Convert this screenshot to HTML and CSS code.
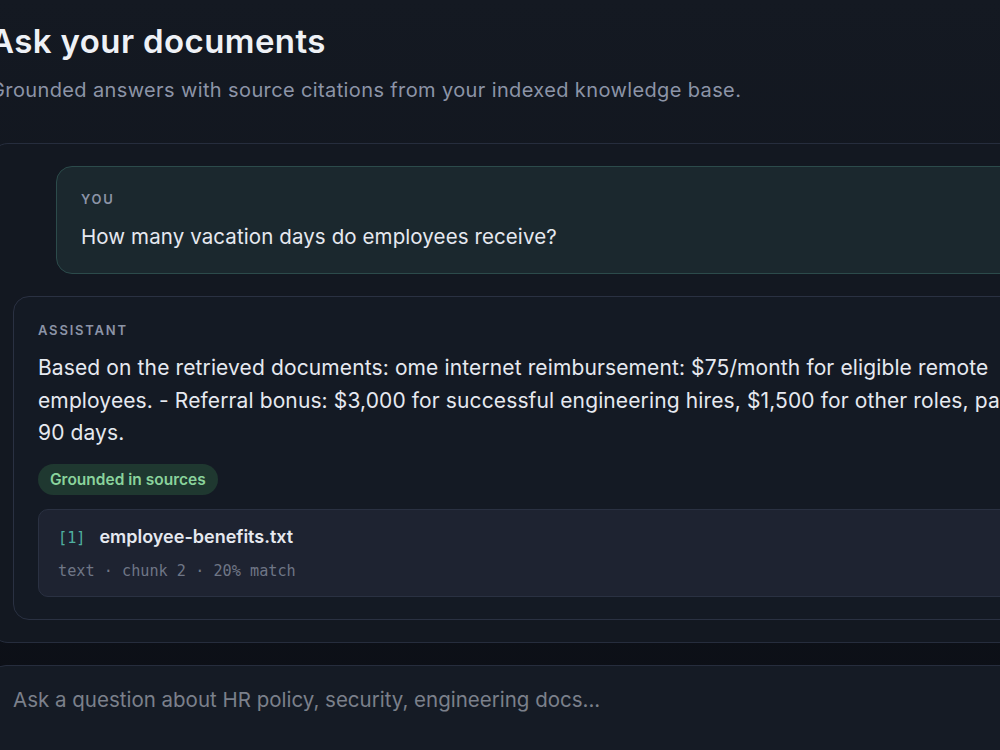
FILE: index.html
```html
<!DOCTYPE html>
<html lang="en">
<head>
  <meta charset="UTF-8" />
  <meta name="viewport" content="width=device-width, initial-scale=1.0"/>
  <title>Ask your documents</title>
  <link rel="stylesheet" href="styles.css">
</head>
<body>

  <main class="page">
    <header class="intro">
      <h1>Ask your documents</h1>
      <p>Grounded answers with source citations from your indexed knowledge base.</p>
    </header>

    <section class="thread">
      <div class="msg msg-user">
        <div class="msg-role">You</div>
        <p class="msg-text">How many vacation days do employees receive?</p>
      </div>

      <div class="msg msg-assistant">
        <div class="msg-role">Assistant</div>
        <p class="msg-text">Based on the retrieved documents: ome internet reimbursement: $75/month for eligible remote employees. - Referral bonus: $3,000 for successful engineering hires, $1,500 for other roles, paid after 90 days.</p>
        <div class="badge">Grounded in sources</div>
        <div class="source">
          <div class="source-head">
            <span class="source-idx">[1]</span>
            <span class="source-name">employee-benefits.txt</span>
          </div>
          <div class="source-meta">text · chunk 2 · 20% match</div>
        </div>
      </div>
    </section>

    <form class="ask">
      <textarea id="question" rows="3" placeholder="Ask a question about HR policy, security, engineering docs..."></textarea>
    </form>
  </main>

</body>
</html>
```

FILE: styles.css
```css
:root {
  --bg-top: #141922;
  --bg-bottom: #0b0e15;
  --panel: #131821;
  --line: #262d3d;
  --text: #e6e9f0;
  --muted: #8c94a7;
}

html, body {
  margin: 0;
  height: 100%;
  overflow: hidden;
}

body {
  background: linear-gradient(180deg, var(--bg-top) 0%, #10141c 60%, var(--bg-bottom) 100%);
  color: var(--text);
  font-family: "Inter", "Noto Sans", sans-serif;
}

.page {
  width: 1136px;
  margin-left: -10px;
  padding-top: 22px;
}

.intro h1 {
  margin: 0;
  font-size: 33px;
  line-height: 38px;
  font-weight: 600;
  letter-spacing: 0.4px;
  color: #eef1f6;
}

.intro p {
  margin: 16px 0 0;
  font-size: 20px;
  line-height: 28px;
  letter-spacing: 0.38px;
  color: var(--muted);
}

.thread {
  margin-top: 39px;
  background: var(--panel);
  border: 1px solid var(--line);
  border-radius: 18px;
  padding: 22px;
  display: flex;
  flex-direction: column;
  gap: 22px;
}

.msg {
  border-radius: 16px;
}

.msg-user {
  margin-left: 43px;
  padding: 23px 24px 21px;
  background: #1b282e;
  border: 1px solid #2c4b4b;
}

.msg-assistant {
  padding: 24px 24px 22px;
  background: #141a24;
  border: 1px solid #2a3142;
}

.msg-role {
  font-size: 13px;
  line-height: 18px;
  font-weight: 600;
  letter-spacing: 1.8px;
  text-transform: uppercase;
  color: var(--muted);
}

.msg-text {
  margin: 13px 0 0;
  font-size: 21px;
  line-height: 32.5px;
  letter-spacing: 0.12px;
  color: var(--text);
}

.msg-user .msg-text {
  font-size: 20.5px;
  line-height: 31px;
  letter-spacing: 0.1px;
}

.badge {
  width: fit-content;
  margin-top: 14px;
  padding: 6px 12px;
  border-radius: 999px;
  background: #1f3830;
  color: #8ad39c;
  font-size: 15.5px;
  line-height: 19px;
  font-weight: 600;
}

.source {
  margin-top: 14px;
  background: #1e2331;
  border: 1px solid #2a3142;
  border-radius: 10px;
  padding: 15px 19px 14px;
}

.source-head {
  display: flex;
  align-items: baseline;
  gap: 14px;
  line-height: 24px;
}

.source-idx {
  font-family: "DejaVu Sans Mono", "Liberation Mono", monospace;
  font-size: 15.2px;
  color: #4fb0a0;
}

.source-name {
  font-size: 18px;
  font-weight: 600;
  color: var(--text);
}

.source-meta {
  margin-top: 10px;
  font-family: "DejaVu Sans Mono", "Liberation Mono", monospace;
  font-size: 15.2px;
  line-height: 22px;
  color: #6f7686;
}

.ask {
  margin-top: 22px;
}

.ask textarea {
  display: block;
  box-sizing: border-box;
  width: 100%;
  height: 120px;
  resize: none;
  background: #151b25;
  border: 1px solid var(--line);
  border-radius: 16px;
  padding: 19px 22px;
  font-family: inherit;
  font-size: 20.5px;
  line-height: 30px;
  color: var(--text);
}

.ask textarea::placeholder {
  color: #7b808b;
}
```
